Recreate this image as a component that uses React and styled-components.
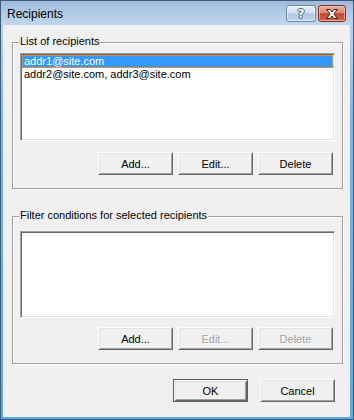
import React from "react";
import styled, { createGlobalStyle, css } from "styled-components";

const Global = createGlobalStyle`
  html, body { margin: 0; padding: 0; background: #ffffff; overflow: hidden; }
  * { box-sizing: border-box; }
`;

const Window = styled.div`
  width: 354px;
  height: 420px;
  border: 1px solid #3d5a80;
  background: linear-gradient(to bottom, #a3bedd 0px, #bad0e9 24px, #7fb5e3 120px, #5aa9e2 100%);
  display: flex;
  flex-direction: column;
  font-family: "Liberation Sans", Arial, sans-serif;
`;

const TitleBar = styled.div`
  height: 24px;
  flex: none;
  display: flex;
  align-items: flex-start;
  padding: 0 7px 0 6px;
  background: linear-gradient(to bottom, #9fbad9 0%, #afc8e4 40%, #c1d6ec 100%);
`;

const TitleText = styled.div`
  font-size: 12px;
  line-height: 14px;
  margin-top: 6px;
  color: #000;
  flex: 1;
`;

const CaptionGroup = styled.div`
  display: flex;
  gap: 2px;
  margin-top: 4px;
`;

const CaptionButton = styled.div`
  height: 17px;
  width: ${(p) => p.$w}px;
  border-radius: 3px;
  display: flex;
  align-items: center;
  justify-content: center;
  ${(p) =>
    p.$close
      ? css`
          border: 1px solid #7a3328;
          background: linear-gradient(to bottom, #e9b2a4 0%, #dc8a75 45%, #c4462c 52%, #d2664c 100%);
          box-shadow: inset 0 0 0 1px rgba(255, 210, 200, 0.55);
        `
      : css`
          border: 1px solid #6a85a8;
          background: linear-gradient(to bottom, #e6eef8 0%, #cfdeef 45%, #aec6e3 52%, #c1d6ee 100%);
          box-shadow: inset 0 0 0 1px rgba(255, 255, 255, 0.55);
        `}
`;

const HelpGlyph = styled.span`
  font-family: "DejaVu Sans", sans-serif;
  font-weight: bold;
  font-size: 12px;
  line-height: 12px;
  color: #ffffff;
  text-shadow: 1px 0 0 #46607f, -1px 0 0 #46607f, 0 1px 0 #46607f, 0 -1px 0 #46607f;
`;

const Client = styled.div`
  flex: 1;
  margin: 0 3px 2px 2px;
  background: #f0f0f0;
  display: flex;
  flex-direction: column;
  padding: 0 0 0 0;
`;

const Group = styled.div`
  position: relative;
  margin: ${(p) => p.$top}px 7px 0 9px;
  border: 1px solid #a0a0a0;
  box-shadow: inset 1px 1px 0 #ffffff, 1px 1px 0 #ffffff;
  padding: ${(p) => p.$padTop}px 7px 13px 7px;
  display: flex;
  flex-direction: column;
  gap: ${(p) => p.$gap}px;
`;

const GroupLabel = styled.div`
  position: absolute;
  top: -8px;
  left: 6px;
  padding: 0 1px;
  background: #f0f0f0;
  font-size: 11px;
  line-height: 13px;
  color: #000;
  white-space: nowrap;
`;

const ListBox = styled.div`
  height: ${(p) => p.$h}px;
  background: #ffffff;
  border: 1px solid;
  border-color: #a0a0a0 #ffffff #ffffff #a0a0a0;
  box-shadow: inset 1px 1px 0 #696969, inset -1px -1px 0 #e3e3e3;
  padding: 1px;
  display: flex;
  flex-direction: column;
`;

const ListRow = styled.div`
  height: 13px;
  line-height: 13px;
  font-size: 11px;
  padding-left: 2px;
  white-space: nowrap;
  color: ${(p) => (p.$selected ? "#ffffff" : "#000000")};
  background: ${(p) => (p.$selected ? "#3399ff" : "transparent")};
  ${(p) =>
    p.$selected &&
    css`
      outline: 1px dotted #f2a25a;
      outline-offset: -1px;
    `}
`;

const ButtonRow = styled.div`
  display: flex;
  justify-content: flex-end;
  gap: ${(p) => p.$gap}px;
  margin-right: ${(p) => p.$right}px;
`;

const Button = styled.div`
  width: 75px;
  height: 23px;
  background: #f0f0f0;
  font-size: 11px;
  display: flex;
  align-items: center;
  justify-content: center;
  color: ${(p) => (p.$disabled ? "#a0a0a0" : "#000000")};
  ${(p) =>
    p.$default
      ? css`
          border: 1px solid #5e5e5e;
          box-shadow: inset 1px 1px 0 #ffffff, inset -1px -1px 0 #696969, inset 2px 2px 0 #e3e3e3,
            inset -2px -2px 0 #a0a0a0;
        `
      : css`
          border: 1px solid;
          border-color: #ffffff #696969 #696969 #ffffff;
          box-shadow: inset 1px 1px 0 #e3e3e3, inset -1px -1px 0 #a0a0a0;
        `}
  ${(p) =>
    p.$disabled &&
    css`
      text-shadow: 1px 1px 0 #ffffff;
    `}
`;

const Footer = styled.div`
  display: flex;
  justify-content: flex-end;
  gap: 12px;
  margin: 15px 15px 0 0;
`;

function CloseIcon() {
  return (
    <svg width="14" height="10" viewBox="0 0 14 10">
      <path
        d="M1.5 0.5 H5 L7 3 L9 0.5 H12.5 L8.8 5 L12.5 9.5 H9 L7 7 L5 9.5 H1.5 L5.2 5 Z"
        fill="#ffffff"
        stroke="#4a1c16"
        strokeWidth="1"
        strokeLinejoin="round"
      />
    </svg>
  );
}

export default function App() {
  return (
    <>
      <Global />
      <Window>
        <TitleBar>
          <TitleText>Recipients</TitleText>
          <CaptionGroup>
            <CaptionButton $w={30}>
              <HelpGlyph>?</HelpGlyph>
            </CaptionButton>
            <CaptionButton $w={28} $close>
              <CloseIcon />
            </CaptionButton>
          </CaptionGroup>
        </TitleBar>
        <Client>
          <Group $top={17} $padTop={10} $gap={11}>
            <GroupLabel>List of recipients</GroupLabel>
            <ListBox $h={88}>
              <ListRow $selected>addr1@site.com</ListRow>
              <ListRow>addr2@site.com, addr3@site.com</ListRow>
            </ListBox>
            <ButtonRow $gap={5} $right={2}>
              <Button>Add...</Button>
              <Button>Edit...</Button>
              <Button>Delete</Button>
            </ButtonRow>
          </Group>
          <Group $top={27} $padTop={14} $gap={9}>
            <GroupLabel>Filter conditions for selected recipients</GroupLabel>
            <ListBox $h={87} />
            <ButtonRow $gap={5} $right={2}>
              <Button>Add...</Button>
              <Button $disabled>Edit...</Button>
              <Button $disabled>Delete</Button>
            </ButtonRow>
          </Group>
          <Footer>
            <Button $default>OK</Button>
            <Button>Cancel</Button>
          </Footer>
        </Client>
      </Window>
    </>
  );
}
